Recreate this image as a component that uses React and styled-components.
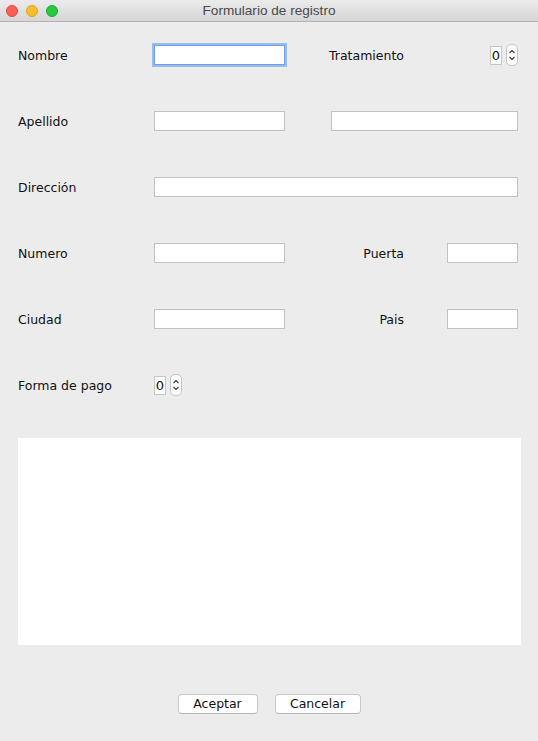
import React from "react";
import styled, { createGlobalStyle } from "styled-components";

const Global = createGlobalStyle`
    html, body {
        margin: 0;
        padding: 0;
        background: #ececec;
    }
    body {
        font-family: "DejaVu Sans", "Liberation Sans", sans-serif;
        color: #111;
    }
`;

const Window = styled.div`
    width: 538px;
    height: 741px;
    background: #ececec;
    display: flex;
    flex-direction: column;
    overflow: hidden;
`;

const TitleBar = styled.div`
    height: 21px;
    border-bottom: 1px solid #b4b4b4;
    background: linear-gradient(#ebebeb, #d6d6d6);
    display: flex;
    align-items: center;
    position: relative;
`;

const Lights = styled.div`
    display: flex;
    gap: 8px;
    padding-left: 6px;
`;

const Light = styled.span`
    width: 12px;
    height: 12px;
    box-sizing: border-box;
    border-radius: 50%;
    background: ${(p) => p.color};
    border: 0.5px solid ${(p) => p.edge};
`;

const Title = styled.div`
    position: absolute;
    left: 0;
    right: 0;
    text-align: center;
    font-family: "Liberation Sans", "Noto Sans", sans-serif;
    font-size: 13.6px;
    color: #4a4a4a;
    pointer-events: none;
`;

const Form = styled.div`
    display: grid;
    grid-template-columns: 136px 131px 1fr 71px;
    grid-auto-rows: 66px;
    align-items: center;
    padding: 0 20px 0 18px;
`;

const Label = styled.div`
    font-size: 12.5px;
    color: #111;
    padding-top: 1px;
`;

const SideLabel = styled(Label)`
    text-align: right;
    padding-right: 43px;
`;

const Field = styled.div`
    height: 18px;
    background: #fff;
    border: 1px solid ${(p) => (p.focused ? "#6f9fe6" : "#c2c2c2")};
    box-shadow: ${(p) => (p.focused ? "0 0 0 2px rgba(120, 168, 238, 0.7)" : "none")};
    grid-column: ${(p) => p.span || "auto"};
    margin-left: ${(p) => p.offset || 0}px;
`;

const Spinner = styled.div`
    display: flex;
    align-items: center;
    gap: 4px;
    justify-self: ${(p) => p.align};
`;

const SpinValue = styled.div`
    width: 10px;
    height: 17px;
    background: #fff;
    border: 1px solid #c6c6c6;
    font-size: 13px;
    line-height: 17px;
    text-align: center;
`;

const SpinArrows = styled.div`
    width: 10px;
    height: 20px;
    border: 1px solid #c4c4c4;
    border-radius: 5px;
    background: #fff;
    display: flex;
    align-items: center;
    justify-content: center;
`;

const TextArea = styled.div`
    margin: 20px 17px 0 18px;
    height: 207px;
    background: #fff;
`;

const Buttons = styled.div`
    flex: 1;
    display: flex;
    justify-content: center;
    align-items: center;
    gap: 17px;
    padding-top: 22px;
`;

const Button = styled.button`
    width: ${(p) => p.w}px;
    height: 20px;
    background: #fff;
    border: 1px solid #c8c8c8;
    border-bottom-color: #b5b5b5;
    border-radius: 4px;
    font-family: "DejaVu Sans", "Liberation Sans", sans-serif;
    font-size: 12.5px;
    color: #111;
    padding: 0;
    line-height: 18px;
`;

const Arrows = () => (
    <svg width="8" height="14" viewBox="0 0 8 14" fill="none" stroke="#333" strokeWidth="1.1">
        <path d="M1.5 5 L4 2.5 L6.5 5" />
        <path d="M1.5 9 L4 11.5 L6.5 9" />
    </svg>
);

const NumberSpinner = ({ align }) => (
    <Spinner align={align}>
        <SpinValue>0</SpinValue>
        <SpinArrows>
            <Arrows />
        </SpinArrows>
    </Spinner>
);

const App = () => (
    <Window>
        <Global />
        <TitleBar>
            <Lights>
                <Light color="#fc5f57" edge="#de4a42" />
                <Light color="#fdbc2e" edge="#dea123" />
                <Light color="#28c840" edge="#1dab2f" />
            </Lights>
            <Title>Formulario de registro</Title>
        </TitleBar>
        <Form>
            <Label>Nombre</Label>
            <Field focused />
            <SideLabel>Tratamiento</SideLabel>
            <NumberSpinner align="end" />

            <Label>Apellido</Label>
            <Field />
            <Field span="3 / 5" offset={46} />

            <Label>Dirección</Label>
            <Field span="2 / 5" />

            <Label>Numero</Label>
            <Field />
            <SideLabel>Puerta</SideLabel>
            <Field />

            <Label>Ciudad</Label>
            <Field />
            <SideLabel>Pais</SideLabel>
            <Field />

            <Label>Forma de pago</Label>
            <NumberSpinner align="start" />
        </Form>
        <TextArea />
        <Buttons>
            <Button w={80}>Aceptar</Button>
            <Button w={86}>Cancelar</Button>
        </Buttons>
    </Window>
);

export default App;
